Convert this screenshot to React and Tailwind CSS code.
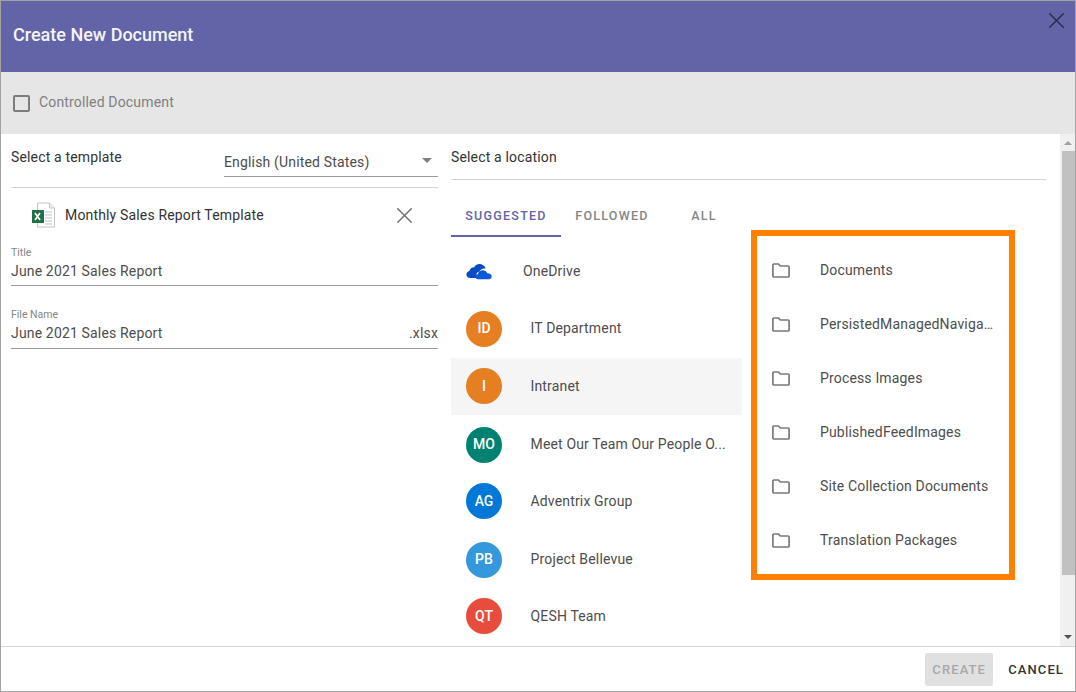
import React from 'react';
import { X } from 'lucide-react';

const sites = [
  { initials: 'ID', name: 'IT Department', color: 'bg-[#e67e22]' },
  { initials: 'I', name: 'Intranet', color: 'bg-[#e67e22]', selected: true },
  { initials: 'MO', name: 'Meet Our Team Our People O...', color: 'bg-[#008272]', nudge: true },
  { initials: 'AG', name: 'Adventrix Group', color: 'bg-[#0078d7]' },
  { initials: 'PB', name: 'Project Bellevue', color: 'bg-[#3498db]', nudge: true },
  { initials: 'QT', name: 'QESH Team', color: 'bg-[#e74c3c]' },
];

const folders = [
  'Documents',
  'PersistedManagedNaviga…',
  'Process Images',
  'PublishedFeedImages',
  'Site Collection Documents',
  'Translation Packages',
];

const FolderIcon = () => (
  <svg width="18" height="15" viewBox="0 0 18 15" className="shrink-0">
    <path d="M1.900 1h4.600l1.800 2h7.800a1 1 0 0 1 1 1v9a1 1 0 0 1-1 1H1.900a1 1 0 0 1-1-1V2a1 1 0 0 1 1-1z" fill="none" stroke="#7a7a7a" strokeWidth="1.700" />
  </svg>
);

const ExcelIcon = () => (
  <svg width="25" height="26" viewBox="0 0 25 26" className="shrink-0">
    <path d="M6.500 1h12l5 5v19h-17z" fill="#fff" stroke="#c4c4c4" />
    <path d="M18.500 1v5h5" fill="#efefef" stroke="#c4c4c4" />
    <path d="M14 10h7M14 13h7M14 16h7M14 19h7M14 22h7" stroke="#cfd8d3" strokeWidth="1.500" />
    <rect x="1" y="8" width="12" height="13" fill="#1e7145" />
    <path d="M4 11l5 7M9 11l-5 7" stroke="#fff" strokeWidth="1.700" />
  </svg>
);

const OneDriveIcon = () => (
  <svg width="27" height="17" viewBox="0 0 27 17">
    <path d="M10.500 15H4.200C2 15 .4 13.500.4 11.500c0-1.800 1.300-3.200 3-3.500C4 5.500 6 4 8.200 4.200 9.500 2 11.700.8 14 1c2.800.2 5 2 5.600 4.600-3-.6-5.500.8-6.300 3.100-1.700-.1-3 1.200-2.800 3.300 0 1.200.1 2.200 0 3z" fill="#0b4cc4" />
    <path d="M12 16.200c-1.500 0-2.600-1.100-2.600-2.500s1-2.400 2.400-2.500c.5-2.400 2.600-4 5-4 2 0 3.800 1.100 4.500 3 2.400-.2 4.400 1.300 4.400 3.300 0 1.500-1.200 2.700-2.800 2.700z" fill="#0b5ad9" />
  </svg>
);

const Tab = ({ label, width, active }) => (
  <div className={`${width} h-[42px] flex items-center justify-center text-[12.5px] font-medium tracking-[1.25px] ${active ? 'pt-[3px] text-[#6264a7] border-b-2 border-[#6264a7]' : 'pt-[1px] text-[#858585]'}`}>
    {label}
  </div>
);

export default function App() {
  return (
    <div className="w-[1076px] h-[692px] flex flex-col border border-[#a3a3a3] bg-white overflow-hidden text-[14px] tracking-[0.16px] text-[#333333] font-['Roboto',sans-serif]">
      <header className="relative h-[71px] shrink-0 bg-[#6264a7] pl-[12px] pt-[22px]">
        <h1 className="text-[18px] leading-[24px] font-medium tracking-normal text-[#f4f4f8]">Create New Document</h1>
        <X size={27} strokeWidth={1.300} className="absolute right-[5px] top-[6px] text-[#2b2c4f]" />
      </header>

      <div className="h-[62px] shrink-0 bg-[#e6e6e6] flex items-center pl-[12px] gap-[9px]">
        <div className="w-[17px] h-[17px] rounded-[2px] border-2 border-[#7d7d7d]" />
        <span className="text-[#808080] -mt-[1px]">Controlled Document</span>
      </div>

      <div className="flex-1 min-h-0 flex">
        <section className="w-[450px] shrink-0 pl-[10px] pr-[13px]">
          <div className="h-[54px] flex border-b border-[#d4d4d4]">
            <span className="pt-[14px] leading-[18px] w-[213px]">Select a template</span>
            <div className="mt-[10px] h-[33px] flex-1 flex items-center justify-between border-b border-[#9b9b9b] pr-[6px] text-[#4d4d4d]">
              <span className="pt-[5px]">English (United States)</span>
              <span className="w-0 h-0 border-x-[5px] border-x-transparent border-t-[5px] border-t-[#808080]" />
            </div>
          </div>
          <div className="h-[54px] flex items-center pl-[20px] pr-[25px]">
            <ExcelIcon />
            <span className="ml-[9px] flex-1">Monthly Sales Report Template</span>
            <X size={27} strokeWidth={1.200} className="-mr-[5px] text-[#6e6e6e]" />
          </div>
          <div className="mt-[5px] border-b border-[#9b9b9b] h-[39px]">
            <div className="text-[10.5px] leading-[12px] tracking-normal text-[#858585]">Title</div>
            <div className="leading-[20px] mt-[2px] text-[#4d4d4d]">June 2021 Sales Report</div>
          </div>
          <div className="mt-[23px] border-b border-[#9b9b9b] h-[40px]">
            <div className="text-[10.5px] leading-[12px] tracking-normal text-[#858585]">File Name</div>
            <div className="leading-[20px] mt-[2px] flex justify-between text-[#4d4d4d]">
              <span>June 2021 Sales Report</span>
              <span>.xlsx</span>
            </div>
          </div>
        </section>

        <section className="flex-1 min-w-0 pr-[14px]">
          <div className="h-[46px] border-b border-[#d4d4d4] pt-[14px] leading-[18px]">Select a location</div>
          <div className="flex mt-[15px]">
            <Tab label="SUGGESTED" width="w-[110px]" active />
            <Tab label="FOLLOWED" width="w-[102px]" />
            <Tab label="ALL" width="w-[82px]" />
          </div>
          <div className="flex">
            <ul className="w-[291px] shrink-0 pt-[6.200px]">
              <li className="h-[57px] flex items-center pl-[15px]">
                <OneDriveIcon />
                <span className="ml-[30px] text-[#4d4d4d]">OneDrive</span>
              </li>
              {sites.map(s => (
                <li key={s.name} className={`h-[57.500px] flex items-center pl-[15px] ${s.selected ? 'bg-[#f5f5f5]' : ''} ${s.nudge ? 'pt-[2px]' : ''}`}>
                  <div className={`w-[36px] h-[36px] rounded-full flex items-center justify-center text-white font-medium tracking-normal ${s.color}`}>{s.initials}</div>
                  <span className="ml-[28.500px] text-[#4d4d4d]">{s.name}</span>
                </li>
              ))}
            </ul>
            <ul className="ml-[9px] -mt-[7px] w-[264px] h-[350px] border-[6px] border-[#ff8000] pt-[7px] shrink-0">
              {folders.map(f => (
                <li key={f} className="h-[54px] flex items-center pl-[15px]">
                  <FolderIcon />
                  <span className="ml-[30px] whitespace-nowrap text-[#4d4d4d]">{f}</span>
                </li>
              ))}
            </ul>
          </div>
        </section>

        <div className="w-[15px] shrink-0 bg-[#f0f0f0] flex flex-col items-center">
          <div className="h-[17px] flex items-center justify-center shrink-0">
            <span className="w-0 h-0 border-x-[4px] border-x-transparent border-b-[4px] border-b-[#a0a0a0]" />
          </div>
          <div className="w-[13px] ml-[1px] h-[424px] bg-[#c1c1c1] shrink-0" />
          <div className="flex-1 flex items-end pb-[7px]">
            <span className="w-0 h-0 border-x-[4px] border-x-transparent border-t-[4px] border-t-[#505050]" />
          </div>
        </div>
      </div>

      <footer className="h-[45px] shrink-0 border-t border-[#d4d4d4] flex items-center justify-end pr-[11px] text-[13px] font-medium tracking-[1.100px]">
        <div className="w-[68px] h-[33px] rounded-[3px] bg-[#e0e0e0] text-[#a8a8a8] flex items-center justify-center pt-[1px]">CREATE</div>
        <div className="ml-[15px] pt-[1px] text-[#333333]">CANCEL</div>
      </footer>
    </div>
  );
}
